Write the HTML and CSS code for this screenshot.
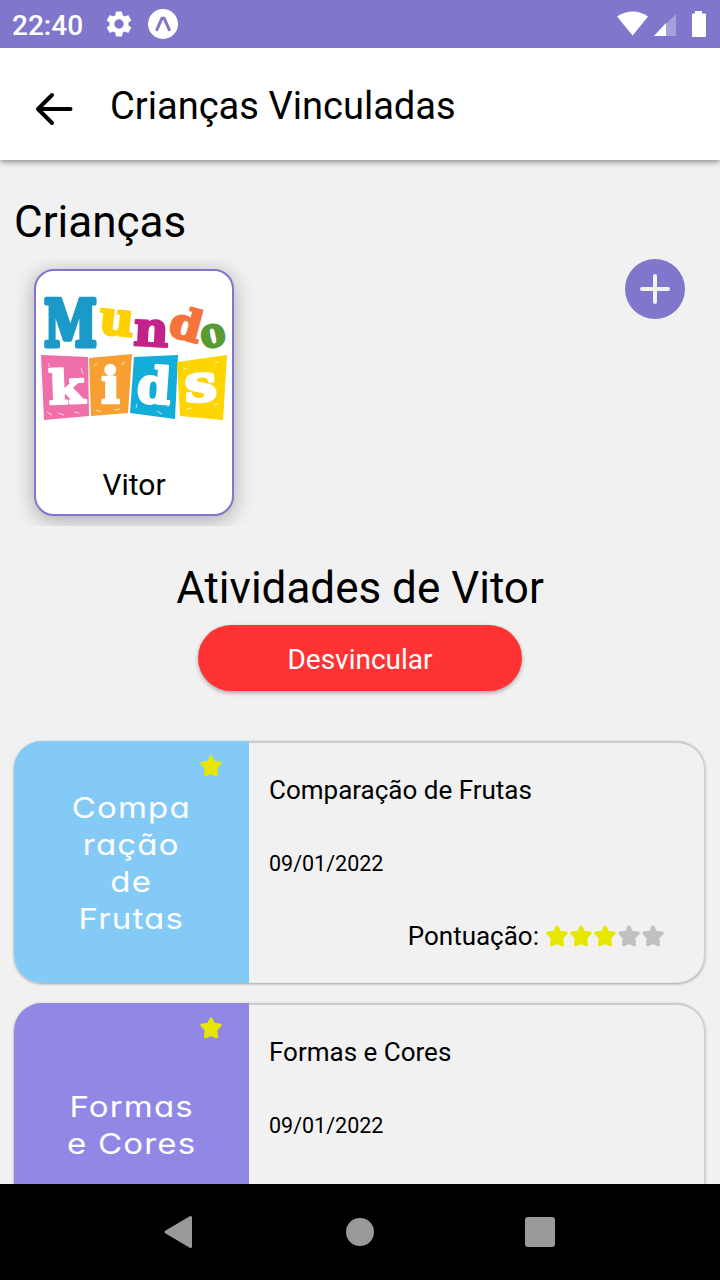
FILE: index.html
```html
<!DOCTYPE html>
<html lang="pt-BR">
<head>
<meta charset="utf-8">
<title>Crianças Vinculadas</title>
<link rel="stylesheet" href="styles.css">
</head>
<body>
<svg class="symbols" width="0" height="0">
  <symbol id="star" viewBox="0 0 24 24"><path d="M12 3.2L14.5 8.5L20.9 9.2L16.6 13.9L17.4 20.6L12 18.3L6.6 20.6L7.4 13.9L3.1 9.2L9.5 8.5Z" fill="currentColor" stroke="currentColor" stroke-width="3.4" stroke-linejoin="round"/></symbol>
</svg>
<div class="screen">
  <div class="status">
    <span class="clock">22:40</span>
    <svg class="gear" width="30" height="30" viewBox="0 0 24 24" fill="#fff"><path d="M19.43 12.98c.04-.32.07-.64.07-.98s-.03-.66-.07-.98l2.11-1.65c.19-.15.24-.42.12-.64l-2-3.46c-.12-.22-.39-.3-.61-.22l-2.49 1c-.52-.4-1.08-.73-1.69-.98l-.38-2.65C14.46 2.18 14.25 2 14 2h-4c-.25 0-.46.18-.49.42l-.38 2.65c-.61.25-1.17.59-1.69.98l-2.49-1c-.23-.09-.49 0-.61.22l-2 3.46c-.13.22-.07.49.12.64l2.11 1.65c-.04.32-.07.65-.07.98s.03.66.07.98l-2.11 1.65c-.19.15-.24.42-.12.64l2 3.46c.12.22.39.3.61.22l2.49-1c.52.4 1.08.73 1.69.98l.38 2.65c.03.24.24.42.49.42h4c.25 0 .46-.18.49-.42l.38-2.65c.61-.25 1.17-.59 1.69-.98l2.49 1c.23.09.49 0 .61-.22l2-3.46c.12-.22.07-.49-.12-.64zM12 15.8a3.8 3.8 0 1 1 0-7.6 3.8 3.8 0 0 1 0 7.6z"/></svg>
    <svg class="expo" width="30" height="30" viewBox="0 0 30 30"><circle cx="15" cy="15" r="15" fill="#fff"/><path d="M8.9 20.6L14 9.2H16.1L21.2 20.6" fill="none" stroke="#8077cc" stroke-width="3" stroke-linejoin="round" stroke-linecap="round"/></svg>
    <svg class="signals" width="90" height="28" viewBox="0 0 90 28" fill="#fff"><path d="M0 6.5Q16-3.5 31 6.5L15.6 25.5Z"/><path d="M37 26L59 4V26Z" opacity=".3"/><path d="M37 26L49 13V26Z"/><path d="M78 1h7v2.500h3q1 0 1 1V26q0 1-1 1H76q-1 0-1-1V4.500q0-1 1-1h2z"/></svg>
  </div>
  <header class="header">
    <svg width="40" height="36" viewBox="0 0 40 36" fill="none" stroke="#000" stroke-width="4" stroke-linecap="round" stroke-linejoin="round"><path d="M18 5L4 19L18 33M4 19H36.500"/></svg>
    <h1 class="title">Crianças Vinculadas</h1>
  </header>
  <main class="content">
    <h2 class="heading">Crianças</h2>
    <div class="children">
      <div class="child-shade">
        <div class="child">
          <svg class="logo" width="196" height="196" viewBox="0 0 196 196">
            <g class="slab">
              <text class="thick" transform="translate(8 75)" font-size="64" textLength="53" fill="#1b9ac9" stroke="#1b9ac9" lengthAdjust="spacingAndGlyphs">M</text>
              <text transform="translate(62 62) rotate(6)" font-size="47" textLength="35" fill="#ffd000" stroke="#ffd000" lengthAdjust="spacingAndGlyphs">u</text>
              <text transform="translate(97 74) rotate(3)" font-size="48" textLength="35" fill="#c32389" stroke="#c32389" lengthAdjust="spacingAndGlyphs">n</text>
              <text transform="translate(131 64) rotate(15)" font-size="43" textLength="32" fill="#f4743b" stroke="#f4743b" lengthAdjust="spacingAndGlyphs">d</text>
              <text transform="translate(167 78) rotate(-12)" font-size="41" textLength="25" fill="#589a33" stroke="#589a33" lengthAdjust="spacingAndGlyphs">o</text>
            </g>
            <path d="M5 84L52 86L53 145L8 149Z" fill="#ee6fa9"/>
            <path d="M53 87L96 83L92 142L55 145Z" fill="#f79f32"/>
            <path d="M98 86L142 84L139 148L94 142Z" fill="#12add9"/>
            <path d="M141 91L191 84L187 149L144 145Z" fill="#fed500"/>
            <path d="M11 141l5 3m6-2l6 2m10-3l5 1M13 92v4m32 1l2 6M58 95l3-3m24 2l4-3M60 139l5 2m13-2l6-1M100 137l1-4m20 7l5 3m6-12v5M147 97l4 1m28-6l4-1M151 138l5-1m22-3l4-1" stroke="#fff" stroke-opacity=".7" stroke-width="1" fill="none"/>
            <g class="slab">
              <text transform="translate(13 133) rotate(-2)" font-size="46" textLength="36" fill="#fff" stroke="#fff" lengthAdjust="spacingAndGlyphs">k</text>
              <text transform="translate(65 132)" font-size="50" textLength="19" fill="#fff" stroke="#fff" lengthAdjust="spacingAndGlyphs">i</text>
              <text transform="translate(100 131) rotate(4)" font-size="50" textLength="34" fill="#fff" stroke="#fff" lengthAdjust="spacingAndGlyphs">d</text>
              <text transform="translate(149 131) rotate(-3)" font-size="52" textLength="33" fill="#fff" stroke="#fff" lengthAdjust="spacingAndGlyphs">s</text>
            </g>
          </svg>
          <span class="child-name">Vitor</span>
        </div>
      </div>
      <div class="add"><svg width="60" height="60" viewBox="0 0 60 60"><path d="M30 17V43M17 30H43" stroke="#f2f2f2" stroke-width="4" stroke-linecap="round"/></svg></div>
    </div>
    <h2 class="heading activities">Atividades de Vitor</h2>
    <div class="unlink">Desvincular</div>
    <section class="card">
      <div class="cover blue">
        <svg class="star badge"><use href="#star"/></svg>
        <div class="name">Compa<br>ração<br>de<br>Frutas</div>
      </div>
      <div class="info">
        <p class="activity">Comparação de Frutas</p>
        <p class="date">09/01/2022</p>
        <div class="score"><span>Pontuação:</span><div class="stars"><svg class="star"><use href="#star"/></svg><svg class="star"><use href="#star"/></svg><svg class="star"><use href="#star"/></svg><svg class="star off"><use href="#star"/></svg><svg class="star off"><use href="#star"/></svg></div></div>
      </div>
    </section>
    <section class="card">
      <div class="cover purple">
        <svg class="star badge"><use href="#star"/></svg>
        <div class="name">Formas<br>e Cores</div>
      </div>
      <div class="info">
        <p class="activity">Formas e Cores</p>
        <p class="date">09/01/2022</p>
      </div>
    </section>
  </main>
  <nav class="nav">
    <svg width="30" height="34" viewBox="0 0 30 34"><path d="M2 17L26.500 2.500V31.500Z" fill="#999" stroke="#999" stroke-width="3" stroke-linejoin="round"/></svg>
    <svg width="30" height="30" viewBox="0 0 30 30"><circle cx="15" cy="15" r="14" fill="#999"/></svg>
    <svg width="30" height="30" viewBox="0 0 30 30"><rect width="30" height="30" rx="3" fill="#999"/></svg>
  </nav>
</div>
</body>
</html>
```
FILE: styles.css
```css
* { box-sizing: border-box; margin: 0; padding: 0; }
body { font-family: Roboto, sans-serif; color: #000; background: #f1f1f1; }
svg { display: block; flex: none; }
.symbols { position: absolute; }
.screen { width: 720px; height: 1280px; display: flex; flex-direction: column; overflow: hidden; }
.status { height: 48px; flex: none; background: #8077cc; color: #fff; display: flex; align-items: center; padding: 0 13px 0 12px; }
.clock { font-size: 28px; font-weight: 500; width: 92px; padding-top: 2px; }
.expo { margin-left: 14px; }
.signals { margin-left: auto; }
.header { height: 112px; flex: none; background: #fff; display: flex; align-items: center; padding: 8px 34px 0; gap: 36px; box-shadow: 0 2px 6px rgba(0,0,0,.42); clip-path: inset(0 0 -12px); position: relative; }
.title { font-size: 38.100px; font-weight: 400; padding-bottom: 4px; white-space: nowrap; }
.content { flex: 1; min-height: 0; overflow: hidden; padding: 36px 14px 0; }
.heading { font-size: 44px; line-height: 52px; font-weight: 400; }
.children { display: flex; justify-content: space-between; padding: 11px 20px 0 0; }
.child-shade { padding: 10px 20px; height: 267px; overflow: hidden; }
.child { width: 200px; height: 247px; border: 2px solid #8077cc; border-radius: 20px; background: #fff; box-shadow: 0 4px 20px rgba(0,0,0,.3); display: flex; flex-direction: column; align-items: center; }
.logo { height: 196px; }
.slab { font-family: "DejaVu Serif", serif; font-weight: 700; stroke-width: 2.500; stroke-linejoin: round; }
.thick { stroke-width: 5; }
.child-name { font-size: 30px; line-height: 36px; }
.add { width: 60px; height: 60px; border-radius: 50%; background: #8077cc; margin-right: 1px; }
.activities { text-align: center; margin-top: 36px; }
.unlink { width: 324px; height: 66px; margin: 11px auto 50px; border-radius: 33px; background: #ff3333; color: #fff; font-size: 28px; line-height: 69px; text-align: center; box-shadow: 0 2px 4px rgba(0,0,0,.3); }
.card { display: flex; height: 242px; margin-bottom: 20px; width: 691px; border-radius: 28px; box-shadow: 0 1px 3px rgba(0,0,0,.35), inset -1px 0 1px #ccc, inset 0 2px 0 #ccc; }
.cover { width: 235px; border-radius: 28px 0 0 28px; color: #fff; position: relative; display: flex; align-items: center; justify-content: center; }
.blue { background: #84caf7; }
.purple { background: #9188e5; }
.name { font-family: Inter, sans-serif; font-size: 29px; line-height: 37px; letter-spacing: 1px; font-feature-settings: "cv11"; font-weight: 400; text-align: center; transform: scaleX(1.14); padding-top: 2px; }
.star { width: 24px; height: 24px; color: #e6e600; }
.off { color: #c0c0c0; }
.badge { position: absolute; right: 26px; top: 13px; }
.info { flex: 1; padding: 34px 40px 0 20px; }
.activity { font-size: 26px; line-height: 30px; }
.date { font-size: 21.500px; line-height: 26px; margin-top: 46px; }
.score { display: flex; justify-content: flex-end; align-items: center; gap: 6px; font-size: 26px; line-height: 30px; margin-top: 44px; }
.stars { display: flex; }
.nav { height: 96px; flex: none; background: #000; display: flex; justify-content: center; align-items: center; gap: 150px; position: relative; }
.nav svg:first-child { margin: 0 1px 0 -1px; }
```
